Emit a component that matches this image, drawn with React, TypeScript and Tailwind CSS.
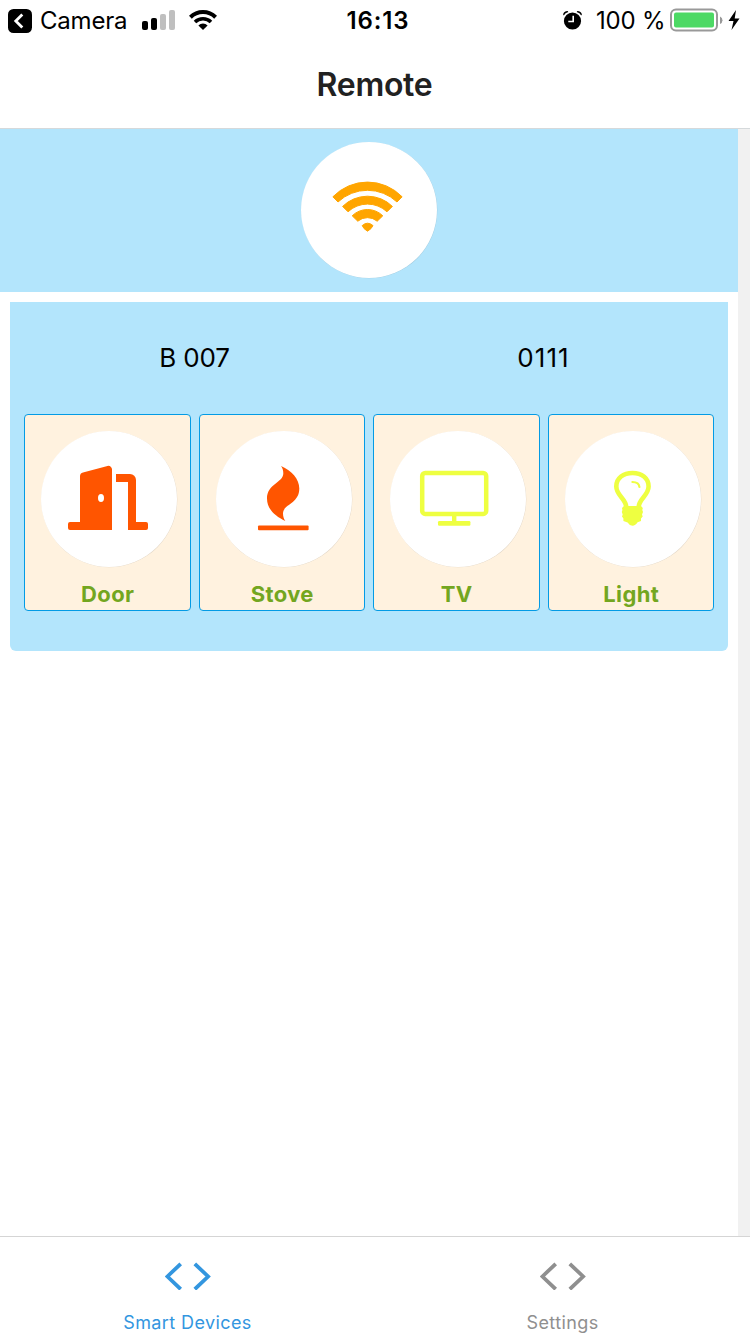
import type { ReactNode } from "react";

function StatusBar() {
  return (
    <div className="flex h-[42px] shrink-0 items-center text-[24px] leading-none text-black">
      <div className="flex flex-1 items-center pl-2">
        <svg className="-mt-px" width="24" height="24" viewBox="0 0 24 24">
          <rect width="24" height="24" rx="5.5" fill="#000" />
          <path d="M14.3 5.5 7.8 12l6.5 6.5" fill="none" stroke="#fff" strokeWidth="2.8" />
        </svg>
        <span className="ml-2 w-[88px] whitespace-nowrap tracking-[-0.2px]">Camera</span>
        <svg className="ml-[14px] -mt-[2px]" width="33" height="20" viewBox="0 0 33 20">
          <rect y="11" width="6" height="9" rx="2" fill="#000" />
          <rect x="9" y="8" width="6" height="12" rx="2" fill="#000" />
          <rect x="18" y="4" width="6" height="16" rx="2" fill="#bfbfbf" />
          <rect x="27" width="6" height="20" rx="2" fill="#bfbfbf" />
        </svg>
        <svg className="ml-[14px] -mt-[2px]" width="28" height="20" viewBox="0 0 28 20">
          <path d="M1.4 7.2a18 18 0 0 1 25.2 0" fill="none" stroke="#000" strokeWidth="4" />
          <path d="M6 12a11.5 11.5 0 0 1 16 0" fill="none" stroke="#000" strokeWidth="3.6" />
          <path d="M9.4 15.4a6.6 6.6 0 0 1 9.2 0L14 20z" fill="#000" />
        </svg>
      </div>
      <span className="pl-[8px] text-center font-semibold tracking-[0.9px]">16:13</span>
      <div className="flex flex-1 items-center justify-end pr-[10px]">
        <svg className="-mt-[2px]" width="20" height="20" viewBox="0 0 20 20">
          <circle cx="9.5" cy="11" r="8.6" fill="#000" />
          <path d="M.1 4.6Q.7 1 4.7.9L5.3 2Q2.1 3 .8 5.4ZM18.9 4.6Q18.3 1 14.3.9L13.7 2Q16.9 3 18.2 5.4Z" fill="#000" />
          <path d="M10.2 5.8v5.7H5.3" fill="none" stroke="#fff" strokeWidth="1.6" />
        </svg>
        <span className="ml-[13px] w-[69px] whitespace-nowrap tracking-[-0.2px]">100 %</span>
        <svg className="ml-[5px] -mt-[2px]" width="54" height="24" viewBox="0 0 54 24">
          <rect x="1" y="1.5" width="46" height="21" rx="5" fill="#fff" stroke="#999" strokeWidth="2" />
          <rect x="4" y="4.5" width="40" height="15" rx="2" fill="#4cd964" />
          <path d="M50 8.5a4 4 0 0 1 0 7.4z" fill="#999" />
        </svg>
        <svg className="ml-[4px] -mt-[2px]" width="12" height="20" viewBox="0 0 12 20">
          <path d="M8 0 .5 11h5L3.5 20 11.5 8.4H6.7z" fill="#000" />
        </svg>
      </div>
    </div>
  );
}

function Disc({ children }: { children: ReactNode }) {
  return (
    <div className="size-[136px] shrink-0 rounded-full bg-white shadow-[0.3px_0.3px_0.3px_rgba(0,0,0,0.12)]">
      <svg width="136" height="136" viewBox="0 0 136 136">
        {children}
      </svg>
    </div>
  );
}

function WifiIcon() {
  return (
    <g fill="#ffa500" stroke="#ffa500" strokeWidth="1" strokeLinejoin="round">
      <path d="M31.9 54.8A48 48 0 0 1 101.1 54.8L96 60A43 43 0 0 0 37 60Z" />
      <path d="M41.6 64.4A35.5 35.5 0 0 1 91.4 64.4L86 69.8A28.5 28.5 0 0 0 47 69.8Z" />
      <path d="M51.2 73.8A21.7 21.7 0 0 1 81.8 73.8L76.2 79.2A15 15 0 0 0 56.8 79.2Z" />
      <path d="M61.2 83.6Q66.5 78.8 72 83.6Q70.5 87 66.5 89.2Q62.5 87 61.2 83.6Z" />
    </g>
  );
}

function DoorIcon() {
  return (
    <g fill="#ff5500">
      <path
        fillRule="evenodd"
        d="M71 99H29a2 2 0 0 1-2-2v-4a2 2 0 0 1 2-2h10V45.5a4 4 0 0 1 3-4L66.5 35a3.6 3.6 0 0 1 4.5 3.8ZM60 63a3 4 0 1 0 0 8a3 4 0 1 0 0-8Z"
      />
      <path d="M75 43h14a6 6 0 0 1 6 6v42h10a2 2 0 0 1 2 2v4a2 2 0 0 1-2 2H87V51H75Z" />
    </g>
  );
}

function StoveIcon() {
  return (
    <g fill="#ff5500">
      <path d="M65 35C76 40 83.3 48 83.3 57.5C83.3 73 67 73 67 82.5C67 86 68 88 69.3 90C59 85 51 78 51 67.5C51 53 67.3 51.5 67.3 42.5C67.3 39 66.5 37 65 35Z" />
      <rect x="42" y="94.4" width="50.6" height="4.8" rx="1" />
    </g>
  );
}

function TvIcon() {
  return (
    <g fill="#eeff41">
      <rect x="32.2" y="41.9" width="64" height="41" rx="3" fill="none" stroke="#eeff41" strokeWidth="4.5" />
      <rect x="62" y="84" width="4.4" height="8" />
      <rect x="48" y="90" width="32.4" height="4.7" rx="1.2" />
    </g>
  );
}

function LightIcon() {
  return (
    <g fill="none" stroke="#eeff41">
      <path
        strokeWidth="4.6"
        d="M61.3 76C60.8 67.5 51.3 64.5 51.3 55.5C51.3 47 58.5 42 67.5 42C76.5 42 83.6 47 83.6 55.5C83.6 64.5 74 67.5 73.6 76"
      />
      <path strokeWidth="2.2" strokeLinecap="round" d="M67.4 51Q74 51 74.4 56" />
      <path
        fill="#eeff41"
        stroke="none"
        d="M59 75H76L77.8 77L77.3 79L78 81L77 83.4L77.7 85.6L76 87.5L76 90L72.6 91.3Q70.5 94.7 67.4 94.7Q64.5 94.7 62.6 91.5L58.4 90V87.5L57 85.6L57.7 83.4L56.8 81L57.4 79L57 77Z"
      />
    </g>
  );
}

function DeviceCard({ label, children }: { label: string; children: ReactNode }) {
  return (
    <div className="flex h-[197px] min-w-0 flex-1 flex-col items-center rounded-[4px] border border-[#039be5] bg-[#fff2df] pt-4">
      <div className="pl-[4px]">
        <Disc>{children}</Disc>
      </div>
      <span className="mt-[13px] pl-[1px] text-[22px] leading-[28px] font-bold tracking-[0.4px] text-[#73a620]">
        {label}
      </span>
    </div>
  );
}

function Tab({ label, active = false }: { label: string; active?: boolean }) {
  return (
    <div className={`flex flex-1 flex-col items-center pt-[25px] ${active ? "text-[#3396df]" : "text-[#8f8f8f]"}`}>
      <svg width="46" height="28" viewBox="0 0 46 28" fill="none" stroke="currentColor" strokeWidth="3.8">
        <path d="M15.7 1.8 2.4 14.5l13.3 12.7M29.8 1.8 43.1 14.5 29.8 27.2" />
      </svg>
      <span className="mt-[22px] text-[18px] leading-[22px] tracking-[0.4px]">{label}</span>
    </div>
  );
}

export default function App() {
  return (
    <div className="flex h-[1334px] w-[750px] flex-col overflow-hidden bg-white font-['Inter','Liberation_Sans',sans-serif]">
      <StatusBar />
      <header className="flex h-[87px] shrink-0 items-center justify-center border-b border-[#d5d9db] pr-[1px] pb-[1px] text-[32px] font-semibold tracking-[-0.3px] text-[#212121]">
        Remote
      </header>
      <main className="flex flex-1 bg-[#f1f1f1]">
        <div className="w-[738px] bg-white">
          <section className="flex h-[163px] justify-center bg-[#b3e5fc] pt-[13px]">
            <Disc>
              <WifiIcon />
            </Disc>
          </section>
          <section className="mx-[10px] mt-[10px] h-[349px] rounded-b-[6px] bg-[#b3e5fc] px-[14px]">
            <div className="flex h-[112px] items-center pb-[2px] text-center text-[26px] text-black">
              <span className="w-[341px] pl-[4px] tracking-[-0.2px]">B 007</span>
              <span className="w-[357px] pl-[12px] tracking-[1.1px]">0111</span>
            </div>
            <div className="flex gap-2">
              <DeviceCard label="Door">
                <DoorIcon />
              </DeviceCard>
              <DeviceCard label="Stove">
                <StoveIcon />
              </DeviceCard>
              <DeviceCard label="TV">
                <TvIcon />
              </DeviceCard>
              <DeviceCard label="Light">
                <LightIcon />
              </DeviceCard>
            </div>
          </section>
        </div>
      </main>
      <nav className="flex h-[98px] shrink-0 border-t border-[#d5d5d5] bg-white">
        <Tab label="Smart Devices" active />
        <Tab label="Settings" />
      </nav>
    </div>
  );
}
